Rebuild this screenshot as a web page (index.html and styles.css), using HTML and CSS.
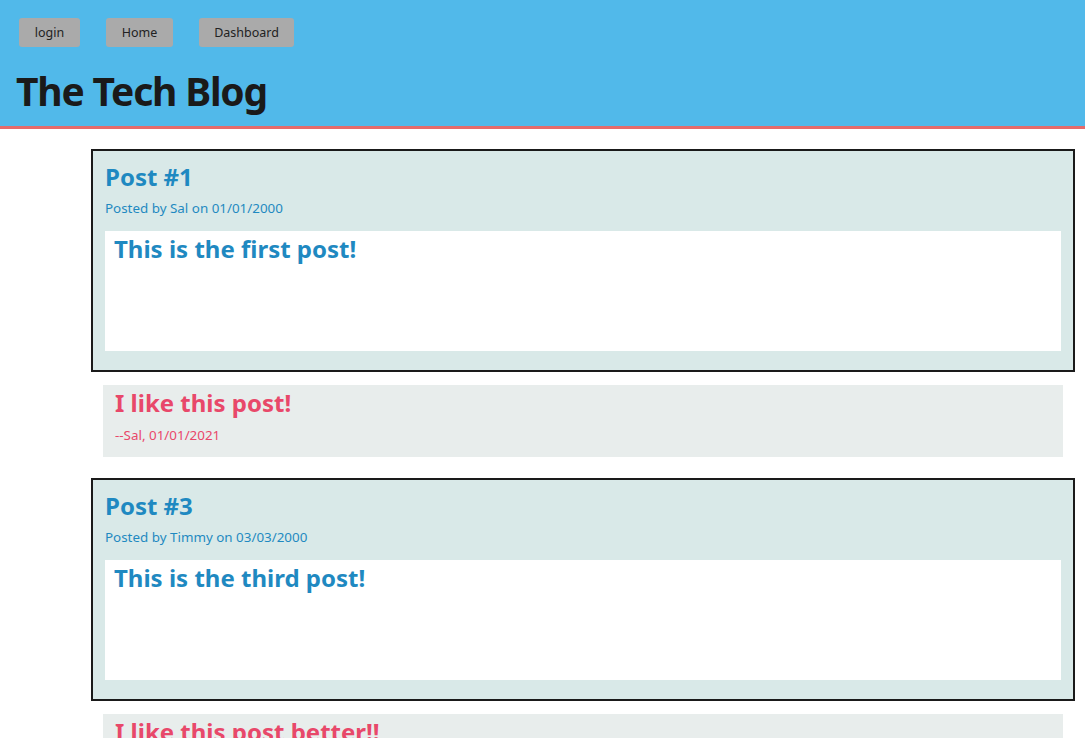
FILE: index.html
```html
<!DOCTYPE html>
<html lang="en">
<head>
<meta charset="utf-8">
<title>The Tech Blog</title>
<link rel="stylesheet" href="styles.css">
</head>
<body>
<header class="site-header">
  <nav class="nav">
    <button class="nav-btn btn-login">login</button>
    <button class="nav-btn btn-home">Home</button>
    <button class="nav-btn btn-dash">Dashboard</button>
  </nav>
  <h1 class="site-title">The Tech Blog</h1>
</header>
<main class="main">
  <article class="post">
    <h2 class="post-title">Post #1</h2>
    <p class="post-meta">Posted by Sal on 01/01/2000</p>
    <div class="post-body"><h3 class="post-text">This is the first post!</h3></div>
  </article>
  <section class="comment">
    <h3 class="comment-text">I like this post!</h3>
    <p class="comment-meta">--Sal, 01/01/2021</p>
  </section>
  <article class="post">
    <h2 class="post-title">Post #3</h2>
    <p class="post-meta">Posted by Timmy on 03/03/2000</p>
    <div class="post-body"><h3 class="post-text">This is the third post!</h3></div>
  </article>
  <section class="comment">
    <h3 class="comment-text">I like this post better!!</h3>
    <p class="comment-meta">--Timmy, 03/03/2021</p>
  </section>
</main>
</body>
</html>
```
FILE: styles.css
```css
* { box-sizing: border-box; }
html, body { margin: 0; padding: 0; }
body {
  font-family: "Noto Sans", "Open Sans", sans-serif;
  background: #ffffff;
  color: #1a1a1a;
}
.site-header {
  background: #51b9ea;
  border-bottom: 3px solid #e66b6b;
  height: 129px;
  padding: 18px 16px 0 19px;
}
.nav {
  display: flex;
  gap: 26px;
}
.nav-btn {
  font-family: inherit;
  font-size: 12.5px;
  color: #222;
  background: #aaaaaa;
  border: none;
  border-radius: 3px;
  height: 29px;
  padding: 0;
}
.btn-login { width: 61px; }
.btn-home { width: 67px; }
.btn-dash { width: 95px; }
.site-title {
  margin: 20px 0 0 -3px;
  font-size: 39px;
  font-weight: 700;
  letter-spacing: -1.2px;
  line-height: 48px;
  color: #1a1a1a;
}
.main {
  padding: 20px 10px 0 91px;
}
.post {
  border: 2px solid #1a1a1a;
  background: #d9e9e8;
  padding: 9px 12px 19px 12px;
}
.post-title {
  margin: 0;
  font-size: 24px;
  font-weight: 700;
  color: #1f89c1;
  line-height: 33px;
}
.post-meta {
  margin: 6px 0 14px;
  font-size: 13.4px;
  color: #1f89c1;
  line-height: 18px;
}
.post-body {
  background: #ffffff;
  height: 120px;
  padding: 1px 9px;
}
.post-text {
  margin: 0;
  font-size: 24px;
  font-weight: 700;
  color: #1f89c1;
  line-height: 33px;
}
.comment {
  background: #e8edec;
  margin: 13px 12px 21px 12px;
  padding: 1px 12px 13px;
}
.comment-text {
  margin: 0;
  font-size: 24px;
  font-weight: 700;
  color: #e8486a;
  line-height: 33px;
}
.comment-meta {
  margin: 7px 0 0;
  font-size: 13.4px;
  color: #e8486a;
  line-height: 18px;
}
```
